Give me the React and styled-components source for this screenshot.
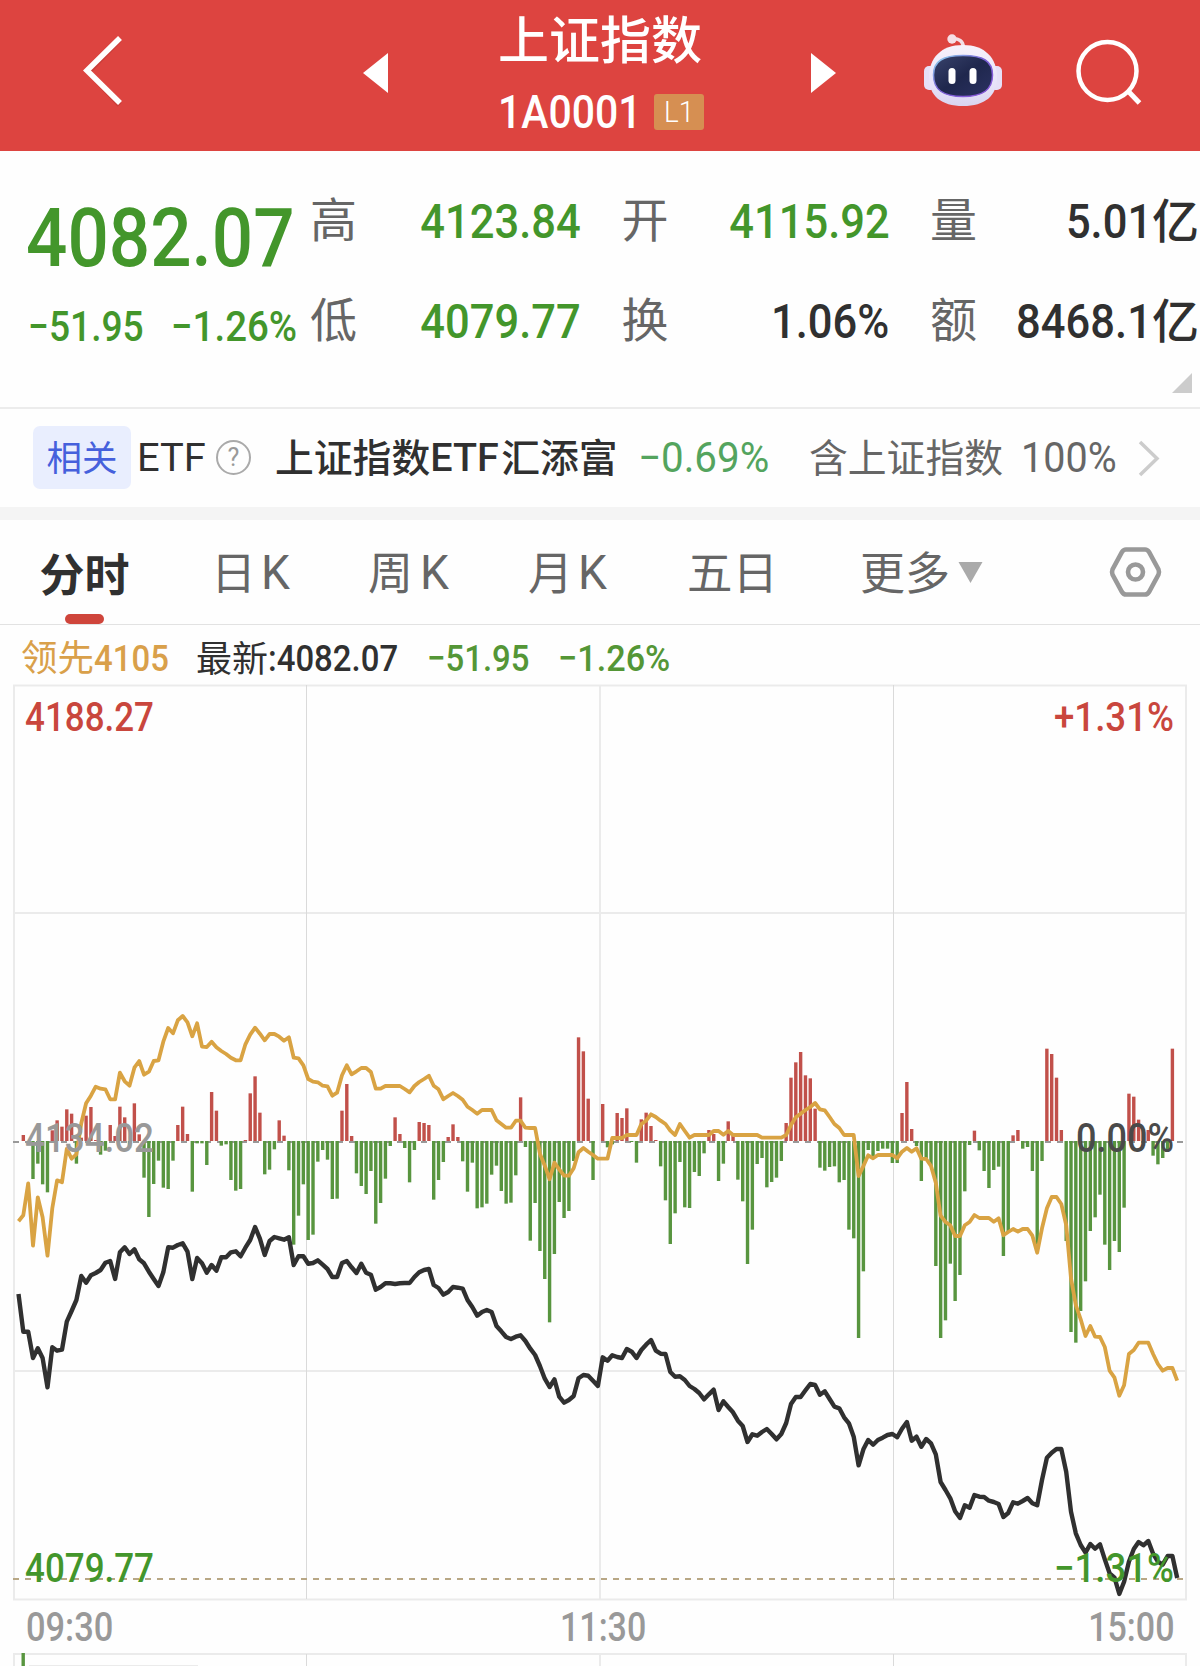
import React from 'react';
import styled, {createGlobalStyle} from 'styled-components';

const GlobalStyle = createGlobalStyle`
  * {
    box-sizing: border-box;
  }
  body {
    margin: 0;
    background: #fefefe;
    font-family: Roboto, 'Noto Sans CJK SC', sans-serif;
    color: #303030;
  }
  svg {
    display: block;
    flex: none;
  }
`;

const GREEN = '#43962b';
const RED = '#c9463d';

const Page = styled.div`
  width: 1200px;
  height: 1666px;
  overflow: hidden;
`;

// narrow figures, the box keeps the width they take on screen
const FigureBox = styled.span`
  flex: none;
  display: flex;
  justify-content: ${p => (p.$right ? 'flex-end' : 'flex-start')};
  width: ${p => p.$w}px;
  height: ${p => p.$size}px;
  font-size: ${p => p.$size}px;
  line-height: ${p => p.$size}px;
  font-weight: ${p => p.$weight || 500};
  color: ${p => p.$color || 'inherit'};
  white-space: nowrap;
`;

const FigureText = styled.span`
  flex: none;
  transform: scaleX(${p => p.$scale});
  transform-origin: ${p => (p.$right ? 'right' : 'left')} center;
`;

const Figure = function({w, size, scale = 0.9, right, weight, color, children}) {
  return (
    <FigureBox $w={w} $size={size} $right={right} $weight={weight} $color={color}>
      <FigureText $scale={scale} $right={right}>
        {children}
      </FigureText>
    </FigureBox>
  );
};

const Hanzi = styled.span`
  flex: none;
  font-family: 'Noto Sans CJK SC', sans-serif;
  font-size: ${p => p.$size}px;
  line-height: ${p => p.$size}px;
  height: ${p => p.$size * 1.11}px;
  font-weight: ${p => p.$weight || 400};
  color: ${p => p.$color || 'inherit'};
  white-space: nowrap;
`;

/* ---------- header ---------- */

const Header = styled.header`
  display: grid;
  grid-template-columns: 363px 26px 422px 26px 1fr;
  align-items: center;
  height: 151px;
  background: #dd4440;
  color: #fff;
`;

const BackCell = styled.div`
  padding: 0 0 10px 79px;
`;

const TitleCell = styled.div`
  display: flex;
  flex-direction: column;
  align-items: center;
  height: 151px;
  padding-top: 12px;
`;

const CodeRow = styled.div`
  display: flex;
  align-items: center;
  height: 36px;
  margin: 25px 0 0 2px;
  gap: 15px;
`;

const LevelBadge = styled.span`
  display: flex;
  align-items: center;
  justify-content: center;
  width: 50px;
  height: 36px;
  border-radius: 3px;
  background: #d68f52;
`;

const ArrowCell = styled.div`
  padding-bottom: 6px;
`;

const Tools = styled.div`
  display: flex;
  align-items: center;
  gap: 72px;
  padding: 0 0 9px 86px;
`;

const Robot = () => (
  <svg width="80" height="74" viewBox="0 0 80 74">
    <defs>
      <linearGradient id="shell" x1="0" y1="0" x2="0" y2="1">
        <stop offset="0" stopColor="#f7f2fb" />
        <stop offset="0.7" stopColor="#e6e2f8" />
        <stop offset="1" stopColor="#d9d4f0" />
      </linearGradient>
      <linearGradient id="face" x1="0" y1="0" x2="1" y2="1">
        <stop offset="0" stopColor="#39436c" />
        <stop offset="0.5" stopColor="#1f274d" />
        <stop offset="1" stopColor="#2b3262" />
      </linearGradient>
      <linearGradient id="rim" x1="0" y1="0" x2="1" y2="1">
        <stop offset="0" stopColor="#8fdcf0" />
        <stop offset="0.45" stopColor="#7b63d6" />
        <stop offset="1" stopColor="#8a54d8" />
      </linearGradient>
    </defs>
    <path d="M28 5Q40 3.500 40.500 14" fill="none" stroke="#f3dfe6" strokeWidth="3.500" />
    <circle cx="29" cy="5" r="4.700" fill="#f6dfe6" />
    <rect x="1" y="32" width="12" height="24" rx="5" fill="#e6e0f7" />
    <rect x="67" y="32" width="12" height="24" rx="5" fill="#e6e0f7" />
    <path
      d="M40 11C62 11 74 24 74 43C74 62 62 72 40 72C18 72 6 62 6 43C6 24 18 11 40 11Z"
      fill="url(#shell)"
    />
    <path
      d="M40 21.500C60 21.500 69.500 27 69.500 41C69.500 56 60 62.500 40 62.500C20 62.500 10.500 56 10.500 41C10.500 27 20 21.500 40 21.500Z"
      fill="url(#face)"
      stroke="url(#rim)"
      strokeWidth="1.500"
    />
    <rect x="25.500" y="34" width="7" height="16" rx="3.500" fill="#fff" />
    <rect x="46.500" y="34" width="7" height="16" rx="3.500" fill="#fff" />
  </svg>
);

const TopBar = () => (
  <Header>
    <BackCell>
      <svg width="44" height="72" viewBox="0 0 44 72">
        <path d="M40.500 5L9.500 37L40.500 70" fill="none" stroke="#b5332f" strokeWidth="5" opacity="0.5" />
        <path d="M41 3L8 35.500L41 68" fill="none" stroke="#fff" strokeWidth="5.600" />
      </svg>
    </BackCell>
    <ArrowCell>
      <svg width="26" height="40">
        <path d="M0 20L25 0V40Z" fill="#fff" />
      </svg>
    </ArrowCell>
    <TitleCell>
      <Hanzi $size={51} $weight={500}>上证指数</Hanzi>
      <CodeRow>
        <Figure w={141} size={46} scale={0.89}>1A0001</Figure>
        <LevelBadge>
          <Figure w={31} size={30} weight={300} scale={0.93}>L1</Figure>
        </LevelBadge>
      </CodeRow>
    </TitleCell>
    <ArrowCell>
      <svg width="26" height="40">
        <path d="M25 20L0 0V40Z" fill="#fff" />
      </svg>
    </ArrowCell>
    <Tools>
      <Robot />
      <svg width="68" height="68" viewBox="0 0 68 68" fill="none" stroke="#fff" strokeWidth="4.500">
        <circle cx="32.500" cy="34" r="29" />
        <path d="M53 54L64.500 66" strokeWidth="5" />
      </svg>
    </Tools>
  </Header>
);

/* ---------- quote ---------- */

const QuotePanel = styled.section`
  display: grid;
  grid-template-columns: 310px 1fr;
  height: 258px;
  border-bottom: 2px solid #ececec;
`;

const PriceCell = styled.div`
  padding: 46px 0 0 26px;
`;

const ChangeRow = styled.div`
  display: flex;
  margin-top: 27px;
  padding-left: 2px;
`;

const Stats = styled.div`
  display: grid;
  grid-template-columns: 271px 268px 269px;
  grid-auto-rows: 100px;
  column-gap: 40.500px;
  padding-top: 20px;
`;

const Stat = styled.div`
  display: flex;
  align-items: center;
  justify-content: space-between;
`;

const StatName = styled.div`
  padding-bottom: 3px;
`;

const StatValue = styled.div`
  display: flex;
  align-items: center;
`;

const Unit = styled.div`
  padding-bottom: 2px;
`;

const Corner = styled.div`
  grid-column: 3;
  display: flex;
  justify-content: flex-end;
  padding: 2px 7px 0 0;
`;

const stats = [
  {label: '高', value: '4123.84', color: GREEN},
  {label: '开', value: '4115.92', color: GREEN},
  {label: '量', value: '5.01', unit: '亿'},
  {label: '低', value: '4079.77', color: GREEN},
  {label: '换', value: '1.06%'},
  {label: '额', value: '8468.1', unit: '亿'},
];

const Quote = () => (
  <QuotePanel>
    <PriceCell>
      <Figure w={266} size={82} color={GREEN} scale={0.888}>4082.07</Figure>
      <ChangeRow>
        <Figure w={143} size={42} color={GREEN} scale={0.885}>−51.95</Figure>
        <Figure w={130} size={42} color={GREEN} scale={0.915}>−1.26%</Figure>
      </ChangeRow>
    </PriceCell>
    <Stats>
      {stats.map(s => (
        <Stat key={s.label}>
          <StatName>
            <Hanzi as="div" $size={47} $color="#666">{s.label}</Hanzi>
          </StatName>
          <StatValue>
            <Figure w={150} size={49} right color={s.color} scale={0.888}>{s.value}</Figure>
            {s.unit && (
              <Unit>
                <Hanzi as="div" $size={47} $weight={500}>{s.unit}</Hanzi>
              </Unit>
            )}
          </StatValue>
        </Stat>
      ))}
      <Corner>
        <svg width="20" height="20">
          <path d="M20 0V20H0Z" fill="#ccc" />
        </svg>
      </Corner>
    </Stats>
  </QuotePanel>
);

/* ---------- related fund ---------- */

const FundRow = styled.section`
  display: flex;
  align-items: center;
  height: 98px;
  padding: 0 0 1px 33px;
`;

const Pill = styled.span`
  display: flex;
  align-items: center;
  justify-content: center;
  width: 98px;
  height: 63px;
  margin-right: 6px;
  border-radius: 7px;
  background: #e9eefe;
`;

const Help = styled.span`
  display: flex;
  align-items: center;
  justify-content: center;
  width: 35px;
  height: 35px;
  margin-right: 24px;
  border: 2px solid #aaa;
  border-radius: 50%;
  font-size: 25px;
  color: #999;
`;

const FundName = styled.span`
  display: flex;
  align-items: center;
  width: 363px;
`;

const More = styled.span`
  margin-left: 5px;
`;

const Related = () => (
  <FundRow>
    <Pill>
      <Hanzi $size={35.5} $color="#4560dc">相关</Hanzi>
    </Pill>
    <Figure w={79} size={39.5} weight={400} scale={1.01}>ETF</Figure>
    <Help>?</Help>
    <FundName>
      <Hanzi $size={38.8} $weight={500}>上证指数</Hanzi>
      <Figure w={71} size={39.5} scale={1}>ETF</Figure>
      <Hanzi $size={38.8} $weight={500}>汇添富</Hanzi>
    </FundName>
    <Figure w={171} size={42} weight={400} color="#54a45e" scale={0.96}>−0.69%</Figure>
    <Hanzi $size={38.8} $color="#666">含上证指数</Hanzi>
    <Figure w={114} size={42} weight={400} color="#666" right scale={0.94}>100%</Figure>
    <More>
      <svg width="44" height="38" viewBox="0 0 44 38">
        <path d="M18 3L35 19.500L18 36" fill="none" stroke="#ccc" strokeWidth="3.500" />
      </svg>
    </More>
  </FundRow>
);

/* ---------- tabs ---------- */

const Tabs = styled.nav`
  display: grid;
  grid-template-columns: 211px 157px 160px 159px 173px 247px 1fr;
  align-items: center;
  height: 118px;
  border-top: 13px solid #f4f4f4;
  border-bottom: 1px solid #e2e2e2;
  color: #666;
`;

const Tab = styled.div`
  display: flex;
  align-items: center;
  gap: ${p => p.$gap || 0}px;
  padding-top: 2px;
`;

const ActiveTab = styled.div`
  display: flex;
  flex-direction: column;
  align-items: center;
  align-self: end;
  width: 169px;
  color: #303030;
`;

const Marker = styled.i`
  width: 39px;
  height: 10px;
  margin-top: 14px;
  border-radius: 5px;
  background: #cf453b;
`;

const kTabs = [
  {label: '日', gap: 5},
  {label: '周', gap: 7},
  {label: '月', gap: 5},
];

const TabBar = () => (
  <Tabs>
    <ActiveTab>
      <Hanzi $size={45} $weight={700}>分时</Hanzi>
      <Marker />
    </ActiveTab>
    {kTabs.map(t => (
      <Tab key={t.label} $gap={t.gap}>
        <Hanzi $size={45}>{t.label}</Hanzi>
        <Figure w={30} size={48} weight={400} scale={0.96}>K</Figure>
      </Tab>
    ))}
    <Tab>
      <Hanzi $size={45.5}>五日</Hanzi>
    </Tab>
    <Tab $gap={8}>
      <Hanzi $size={45}>更多</Hanzi>
      <svg width="25" height="24">
        <path d="M0.500 1H24.500L12.500 22Z" fill="#aaa" />
      </svg>
    </Tab>
    <svg width="58" height="52" viewBox="0 0 58 52" fill="none" stroke="#999" strokeWidth="4.600">
      <path d="M19 3.500H38Q40.500 3.500 42 6L51.500 23.500Q52.500 26 51.500 28.500L42 46Q40.500 48.500 38 48.500H19Q16.500 48.500 15 46L5.500 28.500Q4.500 26 5.500 23.500L15 6Q16.500 3.500 19 3.500Z" />
      <circle cx="28.500" cy="26" r="7.500" />
    </svg>
  </Tabs>
);

/* ---------- chart ---------- */

const Legend = styled.div`
  display: flex;
  align-items: center;
  height: 59px;
  padding: 7px 0 0 21px;
`;

// all series are in thirds of a pixel, one entry per minute
const price = [
  942, 1055, 1055, 1134, 1105, 1134, 1222, 1102, 1112, 1109, 1025, 993, 960, 888, 908, 886, 879, 870, 848, 843,
  897, 817, 802, 822, 808, 838, 850, 875, 897, 918, 877, 802, 803, 795, 790, 815, 897, 834, 850, 878,
  855, 872, 832, 832, 817, 814, 829, 803, 780, 741, 776, 825, 783, 771, 775, 779, 772, 855, 829, 829,
  851, 849, 841, 854, 867, 891, 891, 849, 843, 862, 879, 851, 878, 884, 929, 921, 910, 910, 912, 910,
  909, 909, 891, 877, 870, 867, 915, 924, 944, 936, 921, 923, 926, 960, 981, 1007, 996, 990, 996, 1038,
  1054, 1071, 1077, 1070, 1066, 1083, 1106, 1125, 1158, 1196, 1221, 1198, 1250, 1268, 1260, 1248, 1195, 1185, 1187, 1202,
  1218, 1132, 1142, 1126, 1131, 1134, 1107, 1115, 1134, 1110, 1094, 1080, 1112, 1121, 1122, 1176, 1190, 1189, 1200, 1218,
  1227, 1239, 1258, 1243, 1229, 1290, 1264, 1281, 1297, 1322, 1338, 1386, 1363, 1367, 1356, 1347, 1362, 1378, 1362, 1329,
  1272, 1251, 1251, 1231, 1212, 1215, 1244, 1234, 1257, 1280, 1285, 1312, 1330, 1370, 1456, 1408, 1380, 1394, 1380, 1373,
  1365, 1362, 1372, 1346, 1326, 1382, 1370, 1400, 1377, 1390, 1423, 1506, 1530, 1555, 1594, 1614, 1576, 1583, 1545, 1550,
  1551, 1562, 1566, 1572, 1611, 1599, 1567, 1571, 1563, 1554, 1570, 1576, 1500, 1433, 1418, 1407, 1407, 1475, 1595, 1660,
  1695, 1718, 1692, 1706, 1693, 1738, 1780, 1793, 1842, 1805, 1745, 1707, 1686, 1696, 1683, 1721, 1745, 1754, 1728, 1728,
  1794,
];

const leading = [
  724, 706, 610, 797, 652, 712, 827, 685, 601, 607, 506, 536, 523, 430, 370, 347, 320, 326, 328, 358,
  358, 278, 304, 317, 263, 243, 284, 275, 243, 241, 185, 144, 160, 121, 108, 127, 169, 130, 200, 201,
  185, 202, 213, 222, 233, 241, 241, 193, 164, 143, 161, 181, 162, 162, 170, 182, 172, 233, 235, 256,
  297, 305, 307, 317, 319, 347, 338, 286, 256, 283, 274, 264, 264, 276, 326, 326, 318, 318, 318, 318,
  327, 337, 318, 306, 297, 287, 317, 328, 358, 348, 339, 348, 359, 380, 390, 401, 390, 390, 390, 421,
  432, 443, 443, 422, 422, 443, 444, 444, 521, 557, 598, 548, 568, 587, 587, 565, 517, 504, 515, 525,
  536, 536, 536, 474, 474, 474, 465, 465, 465, 432, 422, 403, 411, 422, 432, 452, 465, 432, 453, 473,
  465, 465, 465, 465, 453, 453, 464, 453, 465, 465, 465, 465, 465, 465, 473, 473, 473, 473, 473, 465,
  435, 412, 401, 390, 381, 369, 388, 391, 411, 432, 444, 465, 465, 465, 588, 558, 526, 535, 525, 525,
  525, 525, 535, 515, 504, 515, 505, 536, 537, 558, 608, 707, 726, 736, 768, 768, 736, 726, 705, 714,
  714, 714, 725, 715, 766, 756, 747, 755, 747, 747, 767, 818, 745, 685, 651, 651, 672, 735, 895, 975,
  1018, 1068, 1038, 1070, 1071, 1101, 1172, 1193, 1247, 1216, 1122, 1110, 1088, 1088, 1088, 1122, 1152, 1172, 1164, 1164,
  1202,
];

const momentum = [
  0, 18, 0, -114, -68, -130, -154, 32, 62, 43, 95, 82, -68, 10, 76, 102, 3, -41, -29, 48,
  15, 103, 71, -20, 113, 20, -110, -228, -129, -59, -140, -144, -59, 48, 103, 21, -152, -7, -7, -72,
  147, 91, -14, -10, -117, -149, -144, 3, 143, 194, 85, -100, -86, -25, 62, 16, -88, -311, -224, -130,
  -297, -281, -62, -27, -56, -174, -173, 91, 171, 15, -97, -135, -159, -90, -248, -186, -113, -15, 71, 21,
  -21, -124, -27, 57, 54, 48, -176, -117, -63, 12, 50, 12, -61, -152, -65, -202, -199, -188, -101, -74,
  -150, -188, -185, -103, 131, -18, -299, -186, -330, -414, -544, -339, -183, -231, -210, -60, 311, 269, 127, -117,
  0, 111, -19, -10, 84, 69, 98, -3, -65, 65, 85, 45, 3, -76, -178, -309, -217, -63, -199, -201,
  -93, -105, -37, 33, 21, -120, -68, 59, 20, -116, -181, -369, -266, -69, -51, -139, -123, -110, -60, 54,
  190, 236, 267, 197, 188, 97, -80, -89, -78, -76, -124, -117, -266, -292, -591, -391, -27, -45, -30, -23,
  -23, -66, -66, 84, 177, 36, -15, -120, -55, -75, -375, -591, -538, -368, -480, -402, -151, -12, 31, -28,
  -90, -141, -87, -77, -345, -275, 17, 33, -23, -18, -90, -325, -60, 277, 261, 190, 33, -300, -573, -605,
  -510, -421, -270, -229, -161, -311, -387, -300, -333, -200, 142, 133, 64, 35, 33, -44, -70, -51, -25, 277,
];

const TOP = 684;
const ZERO = 1141 - TOP;
const xAt = i => 18.5 + i * 4.828;
const toPoints = series =>
  series.map((v, i) => `${xAt(i).toFixed(1)},${(980 - TOP + v / 3).toFixed(1)}`).join(' ');

const ChartLabel = styled.text`
  font-family: Roboto, sans-serif;
  font-size: 40px;
  font-weight: 500;
`;

const Label = ({x, y, w, color, children}) => (
  <ChartLabel x={x} y={y} fill={color} textLength={w} lengthAdjust="spacingAndGlyphs">
    {children}
  </ChartLabel>
);

const TimeAxis = styled.div`
  display: flex;
  justify-content: space-between;
  align-items: center;
  height: 52px;
  padding: 1px 26px 0 26px;
  color: #999;
`;

const Chart = () => (
  <svg width="1200" height="917" viewBox="0 0 1200 917">
    <g fill="none" stroke="#ebebeb" strokeWidth="2">
      <rect x="14" y="1.500" width="1172" height="914" />
      <path d="M14 229H1186M14 687H1186M600 1V915" />
      <path d="M306.500 1V915M893.500 1V915" stroke="#dadada" strokeWidth="1" />
    </g>
    <path d="M13 458H1186" stroke="#999" strokeWidth="1.800" strokeDasharray="6 6" />
    {momentum.map((v, i) =>
      v === 0 ? null : (
        <rect
          key={i}
          x={xAt(i) - 1.7}
          y={v > 0 ? ZERO - v / 3 : ZERO}
          width="3.400"
          height={Math.abs(v) / 3}
          fill={v > 0 ? '#c1504a' : '#58953f'}
        />
      )
    )}
    <polyline points={toPoints(leading)} fill="none" stroke="#d9a343" strokeWidth="3.800" strokeLinejoin="round" />
    <polyline points={toPoints(price)} fill="none" stroke="#303030" strokeWidth="4.400" strokeLinejoin="round" />
    <path d="M13 895H1186" stroke="#b8a785" strokeWidth="2" strokeDasharray="6 6" />
    <Label x={25} y={468} w={129} color="#999">4134.02</Label>
    <Label x={1076} y={468} w={98} color="#4a4a4a">0.00%</Label>
    <Label x={25} y={47} w={129} color={RED}>4188.27</Label>
    <Label x={1054} y={47} w={120} color={RED}>+1.31%</Label>
    <Label x={25} y={898} w={129} color={GREEN}>4079.77</Label>
    <Label x={1054} y={898} w={120} color={GREEN}>−1.31%</Label>
  </svg>
);

const VolumeTop = () => (
  <svg width="1200" height="14" viewBox="0 0 1200 14">
    <g fill="none" stroke="#ebebeb" strokeWidth="2">
      <path d="M14 14V1H1186V14M600 1V14" />
      <path d="M306.500 1V14M893.500 1V14" stroke="#dadada" strokeWidth="1" />
      <path d="M29 12.500H198" strokeWidth="1" />
    </g>
    <rect x="21.500" y="0" width="3.400" height="14" fill="#58953f" />
  </svg>
);

export default class App extends React.Component {
  render() {
    return (
      <Page>
        <GlobalStyle />
        <TopBar />
        <Quote />
        <Related />
        <TabBar />
        <Legend>
          <Hanzi $size={36.5} $color="#d9a04a">领先</Hanzi>
          <Figure w={102} size={37} color="#d9a04a" scale={0.89}>4105</Figure>
          <Hanzi $size={36}>最新</Hanzi>
          <Figure w={159} size={37} scale={0.89}>:4082.07</Figure>
          <Figure w={131} size={37} color="#549636" scale={0.89}>−51.95</Figure>
          <Figure w={120} size={37} color="#549636" scale={0.925}>−1.26%</Figure>
        </Legend>
        <Chart />
        <TimeAxis>
          <Figure w={86} size={40} scale={0.86}>09:30</Figure>
          <Figure w={80} size={40} scale={0.85}>11:30</Figure>
          <Figure w={86} size={40} scale={0.85} right>15:00</Figure>
        </TimeAxis>
        <VolumeTop />
      </Page>
    );
  }
}
